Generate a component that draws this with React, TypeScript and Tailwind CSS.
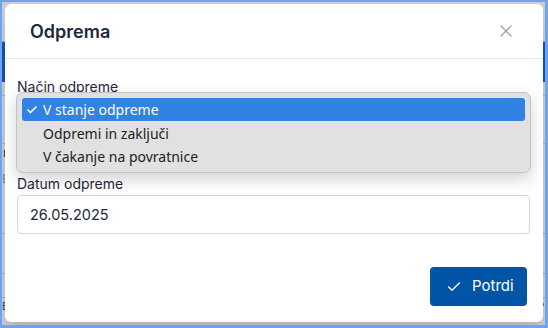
import React from "react";
import { Check, X } from "lucide-react";

const options = ["V stanje odpreme", "Odpremi in zaključi", "V čakanje na povratnice"];
const rowH = ["h-[23px]", "h-[24px]", "h-[23px]"];

function BackgroundPage() {
  // stran pod modalom, vidna samo na robovih
  return (
    <div className="flex flex-col h-full bg-white">
      <div className="h-[40px] border-b border-gray-300"></div>
      <div className="h-[40px] bg-[#1d6ad0]"></div>
      <div className="h-[14px] border-b border-gray-300"></div>
      <div className="h-[48px] border-b border-gray-300"></div>
      <div className="h-[26px] text-[12px] text-gray-700 pl-[1px]">r</div>
      <div className="h-[24px] text-[12px] text-gray-400">E</div>
      <div className="h-[40px] border-b border-gray-300"></div>
      <div className="h-[40px] border-b border-gray-300"></div>
      <div className="h-[24px] border-b border-gray-300"></div>
      <div className="flex items-start text-[11px] uppercase tracking-wide text-gray-600">
        <span className="w-[132px]">Emnik</span>
        <span className="flex-1">Naslov za pošiljanje</span>
        <span className="w-[48px]">Vrsta p</span>
      </div>
    </div>
  );
}

export default function App() {
  return (
    <div
      className="relative w-[548px] h-[328px] overflow-hidden border-l-2 border-t-2 border-r-[3px] border-b-[3px] border-[#6ea3f3]"
      style={{ fontFamily: "Inter, 'Noto Sans', sans-serif" }}
    >
      <BackgroundPage />
      <div className="absolute inset-0 bg-black/20"></div>

      <div className="absolute left-[3px] top-[2px] w-[538px] h-[318px] bg-white rounded-md shadow-lg flex flex-col">
        <div className="h-[55px] flex items-center justify-between pl-[25px] pr-[27px] border-b border-gray-200">
          <h2 className="text-[18px] font-semibold text-gray-800 pt-[1px]">Odprema</h2>
          <X className="w-[20px] h-[20px] text-gray-400" strokeWidth={1.5} />
        </div>

        <div className="flex flex-col pt-[18px] pl-[12px] pr-[13px]">
          <label className="text-[14px] leading-[20px] text-gray-800">Način odpreme</label>
          <div className="relative h-[77px]">
            <div className="h-[39px] border border-gray-300 rounded"></div>
            <div className="absolute -left-[1px] -top-[5px] w-[515px] h-[81px] bg-[#e1e1e1] border border-[#c3c3c3] rounded-[7px] shadow-[0_6px_16px_rgba(0,0,0,0.18)] px-[5px] pt-[5px] flex flex-col">
              {options.map((o, i) => (
                <div
                  key={o}
                  className={`${rowH[i]} shrink-0 flex items-center rounded-[3px] text-[14px] ${
                    i === 0 ? "bg-[#3182e2] text-white" : "text-[#222]"
                  }`}
                  style={{ fontFamily: "'Noto Sans', Inter, sans-serif" }}
                >
                  <span className="w-[21px] pl-[4px] flex items-center">
                    {i === 0 && <Check className="w-[12px] h-[12px]" strokeWidth={3.5} />}
                  </span>
                  <span>{o}</span>
                </div>
              ))}
            </div>
          </div>

          <label className="text-[14px] leading-[20px] text-gray-800">Datum odpreme</label>
          <div className="mt-[1px] h-[39px] border border-gray-300 rounded flex items-center pl-[12px] text-[14.5px] text-gray-800">
            26.05.2025
          </div>

          <div className="flex justify-end mt-[33px] pr-[3px]">
            <button className="w-[97px] h-[39px] bg-[#0254a6] rounded flex items-center pl-[16px] gap-[10px] text-white text-[15px]">
              <Check className="w-[16px] h-[16px]" strokeWidth={2} />
              Potrdi
            </button>
          </div>
        </div>
      </div>
    </div>
  );
}
